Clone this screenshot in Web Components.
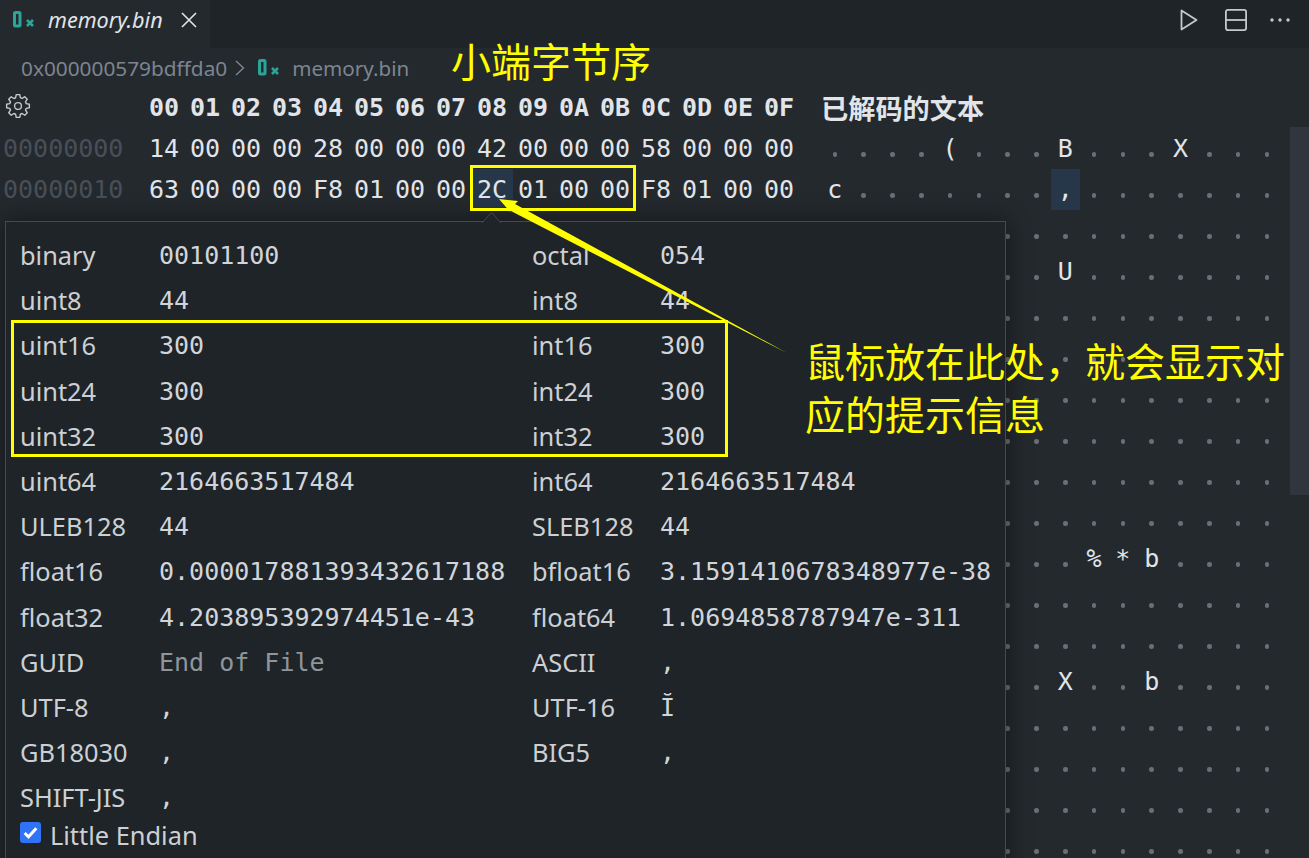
<!DOCTYPE html>
<html><head><meta charset="utf-8">
<style>
html,body{margin:0;padding:0;background:#24292e;overflow:hidden}
</style></head><body>
<hex-app></hex-app>
<script>
const MONO='"DejaVu Sans Mono",monospace';
const SANS='"Noto Sans","Noto Sans CJK SC",sans-serif';
const CJK='"Noto Sans CJK SC",sans-serif';
const zeroX=(c='#2ba597')=>`<svg width="21" height="18" viewBox="0 0 21 18" style="display:block"><rect x="1.5" y="1.5" width="5.5" height="13.5" rx="1" fill="none" stroke="${c}" stroke-width="3"/><path d="M14 9l6 6M20 9l-6 6" stroke="${c}" stroke-width="2.6"/></svg>`;

class HexTab extends HTMLElement{constructor(){super();this.attachShadow({mode:'open'}).innerHTML=`<style>
:host{display:flex;height:48px;background:#1f2428;align-items:stretch}
.tab{width:210px;box-sizing:border-box;background:#24292e;display:flex;align-items:center;padding:0 0 9px 13px}
.t{font:italic 21.6px ${SANS};color:#e1e4e8;margin-left:14px}
.x{margin-left:18px}
.sp{flex:1}
.ac{display:flex;align-items:center;padding:0 18px 9px 0}
</style>
<div class="tab">${zeroX()}<span class="t">memory.bin</span>
<svg class="x" width="16" height="16" viewBox="0 0 16 16"><path d="M1 1l14 14M15 1L1 15" stroke="#e1e4e8" stroke-width="1.6"/></svg></div>
<div class="sp"></div>
<div class="ac">
<svg width="18" height="22" viewBox="0 0 18 22"><path d="M1.5 1.5L16.5 11 1.5 20.5z" fill="none" stroke="#c5c8cc" stroke-width="1.8" stroke-linejoin="round"/></svg>
<svg style="margin-left:26px" width="24" height="24" viewBox="0 0 24 24"><rect x="1.9" y="1.9" width="20.2" height="20.2" rx="2" fill="none" stroke="#c5c8cc" stroke-width="1.8"/><path d="M1.5 12h21" stroke="#c5c8cc" stroke-width="1.8"/></svg>
<svg style="margin-left:21px" width="22" height="24" viewBox="0 0 22 24"><circle cx="3" cy="12" r="1.7" fill="#c5c8cc"/><circle cx="11" cy="12" r="1.7" fill="#c5c8cc"/><circle cx="19" cy="12" r="1.7" fill="#c5c8cc"/></svg>
</div>`}}
customElements.define('hex-tab',HexTab);

class HexCrumbs extends HTMLElement{constructor(){super();this.attachShadow({mode:'open'}).innerHTML=`<style>
:host{display:flex;align-items:center;height:39px;padding-left:21px;font:20.8px ${SANS};color:#7d8590}
svg{display:block}
</style>
<span>0x000000579bdffda0</span>
<svg style="margin:0 13px 0 8px" width="10" height="18" viewBox="0 0 10 18"><path d="M1 2l7.5 7L1 16" fill="none" stroke="#7d8590" stroke-width="1.4"/></svg>
${zeroX()}<span style="margin-left:13px;font-size:20.6px">memory.bin</span>`}}
customElements.define('hex-crumbs',HexCrumbs);

const rows=[
'14 00 00 00 28 00 00 00 42 00 00 00 58 00 00 00',
'63 00 00 00 F8 01 00 00 2C 01 00 00 F8 01 00 00',
];
const dec={0:{4:'(',8:'B',12:'X'},1:{0:'c',8:','},2:{1:'%'},3:{8:'U'},10:{9:'%',10:'*',11:'b'},13:{8:'X',11:'b'}};
class HexGrid extends HTMLElement{constructor(){super();
const hx=s=>s.split(' ').map(h=>`<span class="c${h==='2C'?' hl':''}">${h}</span>`).join('');
let head='';for(let i=0;i<16;i++)head+=`<span class="c">0${i.toString(16).toUpperCase()}</span>`;
let body=`<div class="r h"><span class="a g"><svg width="26" height="26" viewBox="0 0 16 16"><path fill="none" stroke="#c5c8cc" stroke-width=".85" stroke-linejoin="round" d="M6.9 1h2.2l.35 1.9 1.1.47 1.6-1.1 1.56 1.56-1.1 1.6.47 1.1L15 6.9v2.2l-1.92.35-.47 1.1 1.1 1.6-1.56 1.56-1.6-1.1-1.1.47L9.1 15H6.9l-.35-1.92-1.1-.47-1.6 1.1-1.56-1.56 1.1-1.6-.47-1.1L1 9.1V6.9l1.92-.35.47-1.1-1.1-1.6 1.56-1.56 1.6 1.1 1.1-.47z"/><circle cx="8" cy="8" r="2.1" fill="none" stroke="#c5c8cc" stroke-width=".85"/></svg></span><span class="hex">${head}</span><span class="title">已解码的文本</span></div>`;
for(let r=0;r<18;r++){
 let d='';for(let c=0;c<16;c++){const ch=dec[r]&&dec[r][c];d+=`<span class="d${r==1&&c==8?' hl':''}${ch?'':' dot'}">${ch||''}</span>`}
 const addr=rows[r]?r.toString(16).padStart(7,'0')+'0':'';
 body+=`<div class="r"><span class="a">${addr}</span><span class="hex">${rows[r]?hx(rows[r]):''}</span><span class="dec">${d}</span></div>`;
}
this.attachShadow({mode:'open'}).innerHTML=`<style>
:host{display:block;font:25px/41px ${MONO};color:#e1e4e8}
.r{display:flex;height:41px;white-space:pre}
.a{width:149px;padding-left:3px;box-sizing:border-box;color:#484f58}
.a.g{padding-left:5px;display:flex;align-items:center}
.a.g svg{position:relative;top:-2px}
.hex{display:flex;width:671.5px}
.c{width:41px;position:relative}
.h{font-weight:700}
.title{font:700 27.2px/41px ${CJK};color:#e1e4e8;margin-left:.5px}
.dec{display:flex}
.d{width:28.8px;text-align:center;position:relative;height:41px}
.dot::after{content:"";position:absolute;left:50%;top:24px;margin-left:-2.25px;width:4.5px;height:4.5px;border-radius:50%;background:#6a6f75}
.d.hl{background:#27374a}
.c.hl::before{content:"";position:absolute;left:-5px;top:0;width:41px;height:41px;background:#27374a;z-index:-1}
</style>${body}`}}
customElements.define('hex-grid',HexGrid);

class HexKv extends HTMLElement{constructor(){super();this.attachShadow({mode:'open'}).innerHTML=`<style>
:host{display:contents}
.l{font:25.4px/45.2px ${SANS};color:#ccd0d4}
.v{font:25px/45.2px ${MONO};color:#d1d5da;white-space:pre}
.dim{color:#8f959b}
</style><span class="l">${this.getAttribute('k')}</span><span class="v ${this.hasAttribute('dim')?'dim':''}">${this.getAttribute('v')||''}</span>`}}
customElements.define('hex-kv',HexKv);

class HexTip extends HTMLElement{constructor(){super();
const d=[['binary','00101100','octal','054'],['uint8','44','int8','44'],['uint16','300','int16','300'],['uint24','300','int24','300'],['uint32','300','int32','300'],['uint64','2164663517484','int64','2164663517484'],['ULEB128','44','SLEB128','44'],['float16','0.000017881393432617188','bfloat16','3.1591410678348977e-38'],['float32','4.203895392974451e-43','float64','1.0694858787947e-311'],['GUID','End of File','ASCII',','],['UTF-8',',','UTF-16','Ĭ'],['GB18030',',','BIG5',','],['SHIFT-JIS',',']];
const cells=d.map(r=>`<hex-kv k="${r[0]}" v="${r[1]}" ${r[0]=='GUID'?'dim':''}></hex-kv>`+(r[2]?`<hex-kv k="${r[2]}" v="${r[3]}"></hex-kv>`:'')).join('');
this.attachShadow({mode:'open'}).innerHTML=`<style>
:host{position:absolute;left:5px;top:221px;width:1001px;height:660px;box-sizing:border-box;background:#1f2428;border:1px solid #454a50;box-shadow:0 0 24px rgba(0,0,0,.45);padding:11px 14px}
.tip{position:absolute;left:475px;top:-9px}
.g{display:grid;grid-template-columns:139px 373px 128px 1fr;grid-auto-rows:45.2px}
.chk{display:flex;align-items:center;font:25.4px/32px ${SANS};color:#ccd0d4;height:32px;position:relative;top:-1px}
.box{width:21px;height:21px;border-radius:3px;background:#2f74f6;margin-right:9px;display:flex;align-items:center;justify-content:center;position:relative;top:-3px}
</style>
<svg class="tip" width="32" height="10" viewBox="0 0 32 10"><path d="M0 10h32" stroke="#1f2428" stroke-width="2"/><path d="M1 10L10 0h1L20 10" fill="#1f2428" stroke="#454a50"/></svg>
<div class="g">${cells}</div>
<div class="chk"><span class="box"><svg width="17" height="17" viewBox="0 0 16 16"><path d="M2.5 8.5l3.6 3.6L13.5 4" fill="none" stroke="#fff" stroke-width="2.8"/></svg></span>Little Endian</div>`}}
customElements.define('hex-tip',HexTip);

class HexNotes extends HTMLElement{constructor(){super();this.attachShadow({mode:'open'}).innerHTML=`<style>
:host{position:absolute;inset:0;pointer-events:none;color:#ffff00;font:40px/50px ${CJK}}
.b{position:absolute;box-sizing:border-box;border:3px solid #ffff00}
.t{position:absolute;white-space:pre}
svg{position:absolute;left:0;top:0}
</style>
<div class="b" style="left:470px;top:165px;width:166px;height:46px"></div>
<div class="b" style="left:11px;top:320px;width:717px;height:137px"></div>
<svg width="1309" height="858"><polygon fill="#ffff00" points="499,199 518,201 515,204 787,353 507,209 511,213"/></svg>
<div class="t" style="left:451px;top:35px">小端字节序</div>
<div class="t" style="left:805px;top:335px">鼠标放在此处，就会显示对</div>
<div class="t" style="left:805px;top:388px">应的提示信息</div>`}}
customElements.define('hex-notes',HexNotes);

class HexApp extends HTMLElement{constructor(){super();this.attachShadow({mode:'open'}).innerHTML=`<style>
:host{display:block;position:relative;width:1309px;height:858px;overflow:hidden;background:#24292e;isolation:isolate}
.thumb{position:absolute;right:0;top:127px;width:19px;height:368px;background:#31363e}
</style>
<hex-tab></hex-tab><hex-crumbs></hex-crumbs><hex-grid></hex-grid>
<div class="thumb"></div>
<hex-tip></hex-tip><hex-notes></hex-notes>`}}
customElements.define('hex-app',HexApp);
</script>
</body></html>
